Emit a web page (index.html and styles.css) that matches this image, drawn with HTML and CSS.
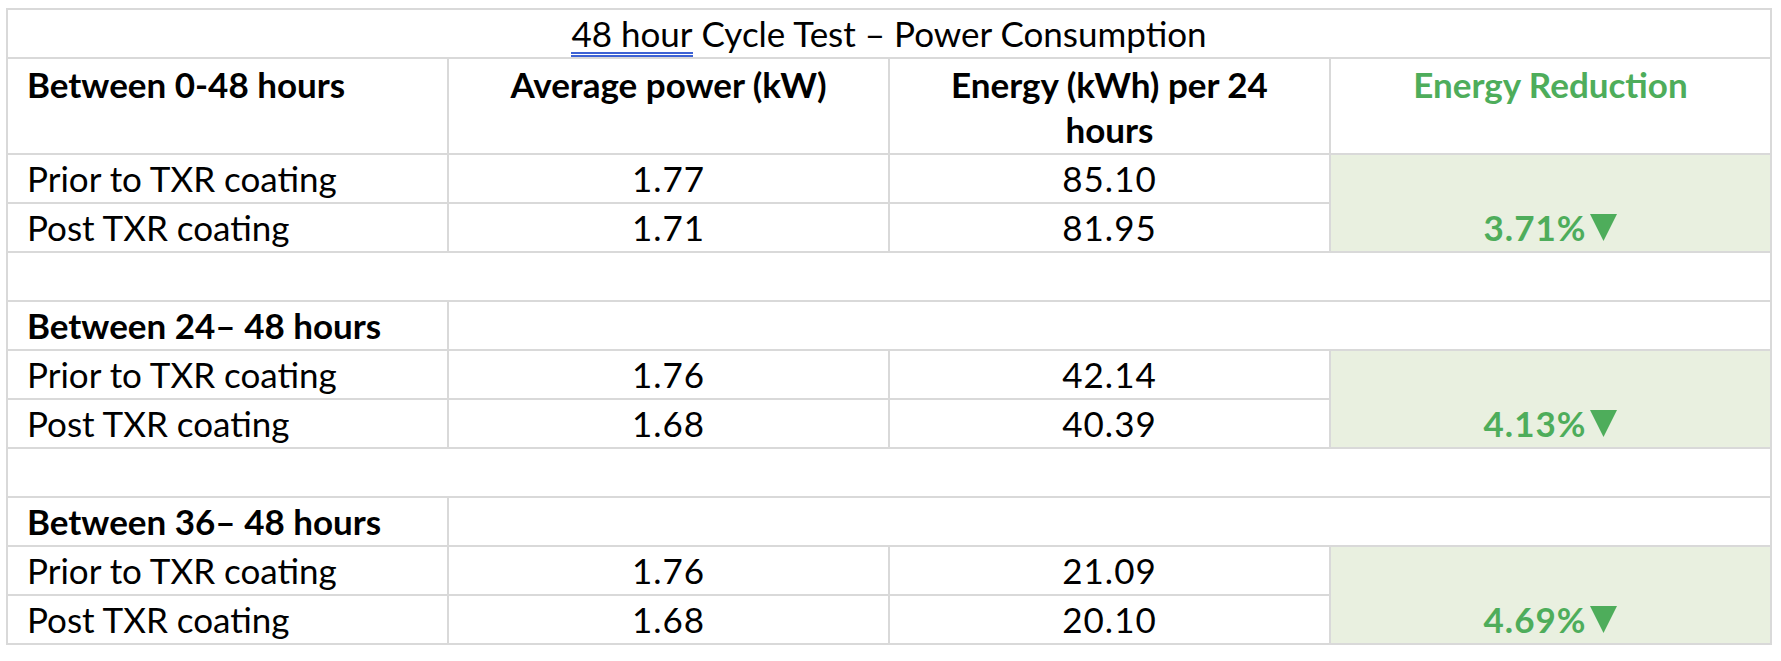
FILE: index.html
```html
<!DOCTYPE html>
<html lang="en">
<head>
<meta charset="utf-8">
<title>48 hour Cycle Test – Power Consumption</title>
<link rel="stylesheet" href="styles.css">
</head>
<body>
<div class="page">
  <div class="sheet">
    <div class="cell title"><span class="spell">48 hour</span> Cycle Test – Power Consumption</div>

    <div class="cell head left">Between 0-48 hours</div>
    <div class="cell head">Average power (kW)</div>
    <div class="cell head">Energy (kWh) per 24<br>hours</div>
    <div class="cell head green">Energy Reduction</div>

    <div class="cell left">Prior to TXR coating</div>
    <div class="cell num">1.77</div>
    <div class="cell num">85.10</div>
    <div class="cell reduction">3.71%<svg class="tri" viewBox="0 0 27 27" width="27" height="27"><polygon points="0,0 27,0 13.5,27"/></svg></div>
    <div class="cell left">Post TXR coating</div>
    <div class="cell num">1.71</div>
    <div class="cell num">81.95</div>

    <div class="cell blank"></div>

    <div class="cell left bold">Between 24– 48 hours</div>
    <div class="cell span3"></div>

    <div class="cell left">Prior to TXR coating</div>
    <div class="cell num">1.76</div>
    <div class="cell num">42.14</div>
    <div class="cell reduction">4.13%<svg class="tri" viewBox="0 0 27 27" width="27" height="27"><polygon points="0,0 27,0 13.5,27"/></svg></div>
    <div class="cell left">Post TXR coating</div>
    <div class="cell num">1.68</div>
    <div class="cell num">40.39</div>

    <div class="cell blank"></div>

    <div class="cell left bold">Between 36– 48 hours</div>
    <div class="cell span3"></div>

    <div class="cell left">Prior to TXR coating</div>
    <div class="cell num">1.76</div>
    <div class="cell num">21.09</div>
    <div class="cell reduction">4.69%<svg class="tri" viewBox="0 0 27 27" width="27" height="27"><polygon points="0,0 27,0 13.5,27"/></svg></div>
    <div class="cell left">Post TXR coating</div>
    <div class="cell num">1.68</div>
    <div class="cell num">20.10</div>
  </div>
</div>
</body>
</html>
```
FILE: styles.css
```css
html, body {
  margin: 0;
  padding: 0;
  background: #ffffff;
}

.page {
  padding: 8px 0 0 6px;
}

.sheet {
  width: 1766px;
  box-sizing: border-box;
  display: grid;
  grid-template-columns: repeat(4, 1fr);
  grid-template-rows: 47px 94px repeat(10, 47px);
  gap: 2px;
  padding: 2px;
  background: #d9d9d9;
  font-family: "Lato", "Liberation Sans", sans-serif;
  font-size: 35px;
  line-height: 45px;
  color: #000000;
}

.cell {
  background: #ffffff;
  display: flex;
  align-items: center;
  justify-content: center;
  white-space: nowrap;
}

.title {
  grid-column: 1 / span 4;
  display: block;
  text-align: center;
  padding-top: 1px;
}

.spell {
  display: inline-block;
  line-height: 37px;
  border-bottom: 5px double #3d62d4;
}

.head {
  font-weight: 700;
  align-items: flex-start;
  text-align: center;
  padding-top: 3px;
}

.num {
  letter-spacing: 1px;
}

.left {
  justify-content: flex-start;
  padding-left: 19px;
}

.bold {
  font-weight: 700;
}

.green {
  color: #4ead5b;
}

.blank {
  grid-column: 1 / span 4;
}

.span3 {
  grid-column: 2 / span 3;
}

.reduction {
  grid-column: 4;
  grid-row: span 2;
  background: #e9f0e0;
  color: #4ead5b;
  font-weight: 700;
  letter-spacing: 1px;
  align-items: flex-end;
  padding-bottom: 1px;
}

.tri {
  fill: #4ead5b;
  margin-left: 4px;
  margin-bottom: 9px;
}
```
